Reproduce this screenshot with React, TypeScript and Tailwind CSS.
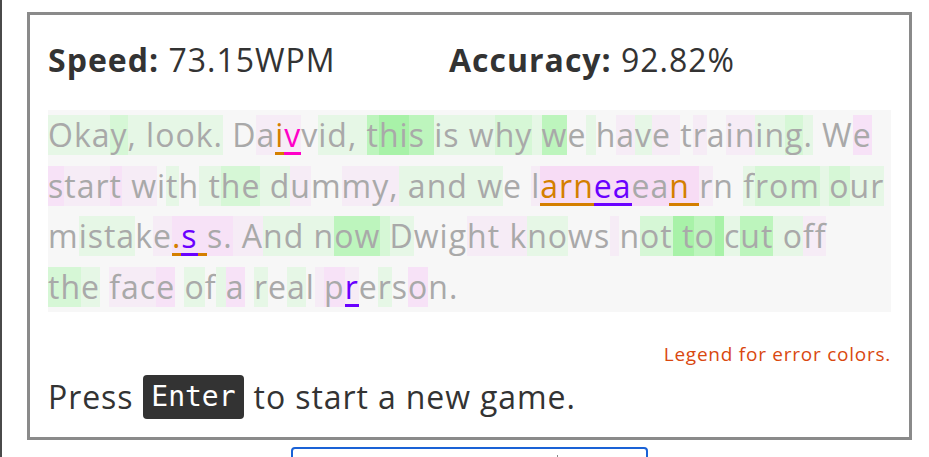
import React from "react";

type Seg = [string, string, string?];

const bgs: Record<string, string> = {
  n: "",
  g1: "bg-[#e6f7e6]",
  g2: "bg-[#d6f7d6]",
  g3: "bg-[#bdf5bd]",
  g4: "bg-[#a8f2a8]",
  p1: "bg-[#f6ecf6]",
  p2: "bg-[#f7e2f7]",
  p3: "bg-[#f7dcf5]",
};

const fgs: Record<string, string> = {
  x: "text-[#a9a9a9]",
  o: "text-[#d47f00] shadow-[inset_0_-3px_0_#d47f00]",
  m: "text-[#ff00c8] shadow-[inset_0_-3px_0_#ff00c8]",
  u: "text-[#6a00ff] shadow-[inset_0_-3px_0_#6a00ff]",
};

const lines: Seg[][] = [
  [
    ["Oka", "g1"], ["y", "g2"], [", look.", "g1"], [" D", "n"], ["a", "p1"],
    ["i", "p1", "o"], ["v", "p1", "m"], ["v", "n"], ["id, ", "g1"], ["t", "g3"],
    ["hi", "g4"], ["s ", "g3"], ["is w", "g1"], ["hy", "g2"], [" ", "g1"],
    ["w", "g3"], ["e", "n"], [" ", "g1"], ["h", "n"], ["a", "p1"], ["v", "g1"],
    ["e ", "p1"], ["t", "n"], ["r", "p1"], ["a", "n"], ["in", "p1"], ["in", "g1"],
    ["g", "g2"], [".", "g1"], [" W", "n"], ["e", "p2"],
  ],
  [
    ["s", "p2"], ["tar", "p1"], ["t", "p2"], [" w", "p1"], ["i", "n"], ["t", "g1"],
    ["h", "n"], [" t", "g1"], ["he", "g2"], [" d", "g1"], ["u", "p1"], ["m", "n"],
    ["my,", "p1"], [" and w", "g1"], ["e ", "n"], ["l", "p1"], ["arn", "p3", "o"],
    ["ea", "p3", "u"], ["ea", "p3"], ["n ", "p3", "o"], ["r", "p1"], ["n ", "n"],
    ["f", "g1"], ["rom", "g2"], [" ", "g1"], ["o", "g2"], ["ur", "g1"],
  ],
  [
    ["m", "n"], ["ista", "g1"], ["k", "n"], ["e", "p1"], [".", "p2", "o"],
    ["s", "p2", "u"], [" ", "p2", "o"], ["s.", "p2"], [" A", "p1"], ["nd n", "g1"],
    ["ow", "g3"], [" ", "g2"], ["D", "g1"], ["wig", "n"], ["ht k", "p1"],
    ["no", "g1"], ["ws", "n"], [" ", "p1"], ["n", "n"], ["ot", "g2"], [" t", "g4"],
    ["o", "g3"], [" ", "g4"], ["c", "g1"], ["ut", "g3"], [" o", "g1"], ["ff", "p1"],
  ],
  [
    ["th", "g2"], ["e", "g1"], [" ", "n"], ["fa", "p1"], ["c", "p1"], ["e", "p2"],
    [" ", "n"], ["o", "g1"], ["f", "n"], [" ", "g1"], ["a", "p2"], [" ", "n"],
    ["r", "g1"], ["e", "n"], ["a", "g1"], ["l", "n"], [" ", "p1"], ["p", "p2"],
    ["r", "p1", "u"], ["e", "n"], ["r", "g1"], ["s", "n"], ["o", "p2"], ["n.", "n"],
  ],
];

export default function App() {
  return (
    <div className="min-h-[457px] bg-white border-l-2 border-[#4a4a4a] font-['Open_Sans',sans-serif] overflow-hidden">
      <div className="ml-[25px] mt-[12px] w-[885px] border-[3px] border-[#8a8a8a] px-[18px] pt-[18px] pb-[17px] text-[#333]">
        {/* stats */}
        <div className="flex items-center h-[54px] text-[32px] tracking-[1px]">
          <div className="w-[401px]">
            <span className="font-bold">Speed:</span> 73.15WPM
          </div>
          <div>
            <span className="font-bold">Accuracy:</span> 92.82%
          </div>
        </div>

        {/* typed text */}
        <div className="mt-[23px] h-[202px] bg-[#f7f7f7] text-[32px] tracking-[1px] leading-[50.67px] whitespace-pre">
          {lines.map((line, i) => (
            <div key={i}>
              {line.map(([t, bg, fg], j) => (
                <span key={j} className={`inline-block leading-[40px] ${bgs[bg]} ${fgs[fg ?? "x"]}`}>
                  {t}
                </span>
              ))}
            </div>
          ))}
        </div>

        <div className="mt-[30px] text-right text-[19px] tracking-[0.75px] leading-6 text-[#d9480f]">
          Legend for error colors.
        </div>

        <div className="mt-[8px] flex items-center h-[46px] text-[32px] tracking-[0.9px]">
          <span>Press</span>
          <kbd className="mx-[10px] h-[44px] px-[8px] flex items-center rounded-[4px] bg-[#333] text-white font-['DejaVu_Sans_Mono',monospace] text-[28px] tracking-normal">
            Enter
          </kbd>
          <span>to start a new game.</span>
        </div>
      </div>

      <div className="ml-[289px] mt-[7px] w-[357px] h-[30px] border-2 border-[#1a62d6] rounded-[4px] flex">
        <div className="w-[264px]" />
        <div className="mt-[6px] w-px h-[20px] bg-[#888]" />
      </div>
    </div>
  );
}
